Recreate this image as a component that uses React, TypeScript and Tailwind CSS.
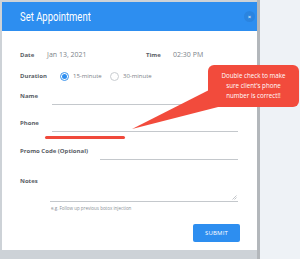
import { useState } from 'react';

const font = { fontFamily: '"Open Sans", "Liberation Sans", sans-serif' };

function Radio({ checked, label }: { checked: boolean; label: string }) {
  return (
    <div className="flex items-center gap-[4px]">
      <span
        className={
          checked
            ? 'w-[9px] h-[9px] rounded-full border border-[#3a93ec] flex items-center justify-center'
            : 'w-[9px] h-[9px] rounded-full border border-[#c9cdd1]'
        }
      >
        {checked && <span className="w-[5px] h-[5px] rounded-full bg-[#2d8ef0]" />}
      </span>
      <span className="text-[6px] text-[#7a8086]">{label}</span>
    </div>
  );
}

export default function App() {
  const [duration] = useState('15');

  return (
    <div className="relative w-[300px] h-[259px] overflow-hidden bg-[#eef2f6]" style={font}>
      {/* modal frame */}
      <div className="w-[260px] h-[259px] bg-[#cdd2d7] pl-[2px] pt-[2px] pb-[9px] border-r-[3px] border-[#b3b7bb]">
        <div className="w-[255px] h-[248px] bg-white flex flex-col">
          {/* header */}
          <div className="h-[29px] bg-[#2d8ef0] flex items-center justify-between pl-[18px] pr-[2px]">
            <span
              className="text-[13px] text-white origin-left scale-x-[0.73] whitespace-nowrap"
              style={{ fontFamily: 'Roboto, "Open Sans", sans-serif' }}
            >
              Set Appointment
            </span>
            <span className="w-[11px] h-[11px] rounded-full bg-[#2a84e0] flex items-center justify-center text-[6px] leading-none text-white">
              ×
            </span>
          </div>

          <div className="flex flex-col pl-[18px] pr-[19px]">
            {/* date / time */}
            <div className="h-[14px] mt-[17px] flex items-center text-[6px]">
              <span className="w-[27px] font-bold text-[#5a6066]">Date</span>
              <span className="w-[99px] text-[7px] text-[#7d838a]">Jan 13, 2021</span>
              <span className="w-[27px] font-bold text-[#5a6066]">Time</span>
              <span className="text-[7px] text-[#7d838a]">02:30 PM</span>
            </div>

            {/* duration */}
            <div className="h-[14px] mt-[7px] flex items-center">
              <span className="w-[40px] text-[6px] font-bold text-[#5a6066]">Duration</span>
              <div className="w-[50px]">
                <Radio checked={duration === '15'} label="15-minute" />
              </div>
              <Radio checked={duration === '30'} label="30-minute" />
            </div>

            {/* name */}
            <div className="h-[14px] mt-[8px] flex items-end">
              <span className="w-[32px] text-[6px] font-bold text-[#5a6066] mb-[4px]">Name</span>
              <div className="flex-1 border-b border-[#c4c8cc]" />
            </div>

            {/* phone */}
            <div className="h-[14px] mt-[13px] flex items-end">
              <span className="w-[32px] text-[6px] font-bold text-[#5a6066] mb-[4px]">Phone</span>
              <div className="flex-1 border-b border-[#c4c8cc]" />
            </div>
            <div className="ml-[25px] mt-[4px] w-[80px] h-[3px] rounded-full bg-[#f0493b]" />

            {/* promo */}
            <div className="h-[14px] mt-[7px] flex items-end">
              <span className="w-[80px] text-[6px] font-bold text-[#5a6066] mb-[4px]">Promo Code (Optional)</span>
              <div className="flex-1 border-b border-[#c4c8cc]" />
            </div>

            {/* notes */}
            <div className="mt-[16px] flex">
              <span className="text-[6px] font-bold text-[#5a6066] leading-[10px]">Notes</span>
            </div>
            <div className="ml-[30px] h-[14px] mt-[2px] border-b border-[#c4c8cc] relative">
              <svg className="absolute right-[1px] bottom-[1px]" width="5" height="5" viewBox="0 0 5 5">
                <path d="M4.5 0.5 L0.5 4.5 M4.5 2.5 L2.5 4.5" stroke="#9aa0a6" strokeWidth="0.6" />
              </svg>
            </div>
            <div className="ml-[31px] mt-[3px] text-[4.5px] leading-[6px] text-[#8a9096]">
              e.g. Follow up previous botox injection
            </div>

            {/* submit */}
            <div className="flex justify-end mt-[13px] mr-[-2px]">
              <div className="w-[47px] h-[18px] bg-[#2d8ef0] rounded-[2px] flex items-center justify-center text-[6px] text-white tracking-[0.2px]">
                SUBMIT
              </div>
            </div>
          </div>
        </div>
      </div>

      {/* callout tail */}
      <svg className="absolute left-0 top-0" width="300" height="259" viewBox="0 0 300 259">
        <polygon points="211,89 222,106 132,129" fill="#f24b3c" />
      </svg>
      {/* callout */}
      <div className="absolute left-[208px] top-[65px] w-[91px] h-[42px] rounded-[6px] bg-[#f24b3c] flex items-center justify-center text-center text-[6.2px] leading-[10px] text-white">
        Double check to make
        <br />
        sure client's phone
        <br />
        number is correct!!
      </div>
    </div>
  );
}
